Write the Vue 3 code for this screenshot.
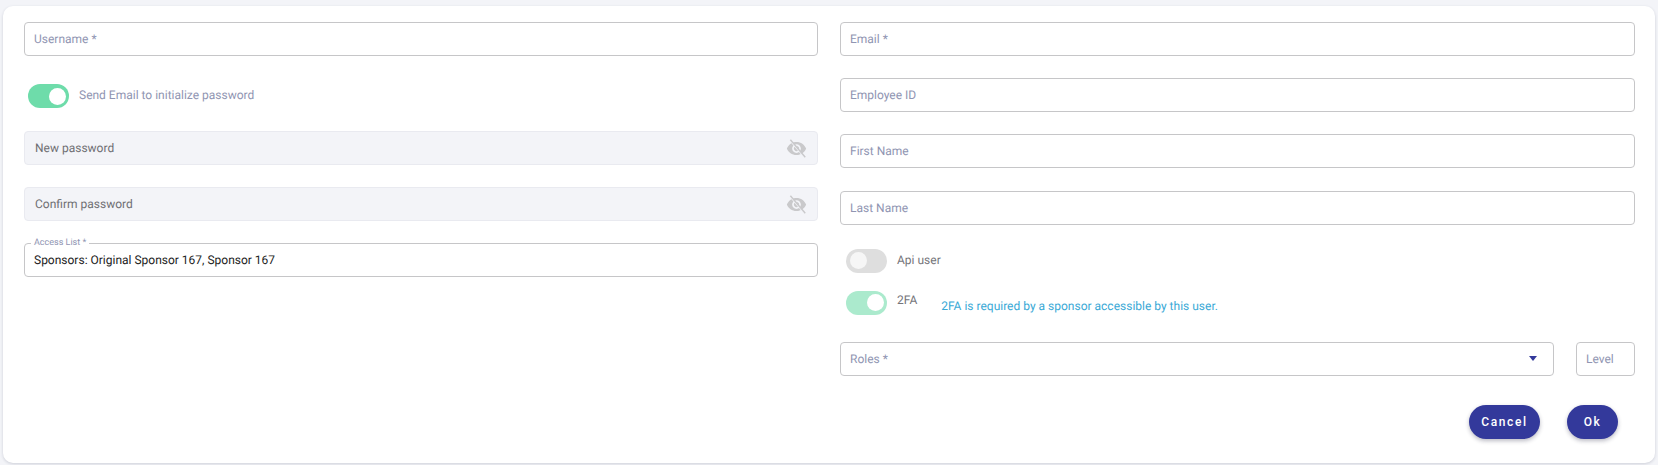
<script setup>
const eyeBody = 'M12 4.5C7 4.5 2.73 7.61 1 12c1.73 4.39 6 7.5 11 7.5s9.27-3.11 11-7.5c-1.73-4.39-6-7.5-11-7.5zM12 17c-2.76 0-5-2.24-5-5s2.24-5 5-5 5 2.24 5 5-2.24 5-5 5zm0-8c-1.66 0-3 1.34-3 3s1.34 3 3 3 3-1.34 3-3-1.34-3-3-3z'
</script>

<template>
  <div class="page">
    <form class="card" @submit.prevent>
      <div class="columns">
        <div class="col">
          <div class="field"><span class="ph">Username *</span></div>
          <div class="toggle-row send">
            <span class="switch on"><span class="knob"></span></span>
            <span class="toggle-label muted">Send Email to initialize password</span>
          </div>
          <div class="field filled">
            <span class="ph dark">New password</span>
            <svg class="eye" viewBox="0 0 24 24">
              <path :d="eyeBody" />
              <line class="slash-bg" x1="4" y1="2" x2="21" y2="22" />
              <line class="slash" x1="5" y1="2" x2="22" y2="22" />
            </svg>
          </div>
          <div class="field filled">
            <span class="ph dark">Confirm password</span>
            <svg class="eye" viewBox="0 0 24 24">
              <path :d="eyeBody" />
              <line class="slash-bg" x1="4" y1="2" x2="21" y2="22" />
              <line class="slash" x1="5" y1="2" x2="22" y2="22" />
            </svg>
          </div>
          <div class="field">
            <span class="float">Access List *</span>
            <span class="value">Sponsors: Original Sponsor 167, Sponsor 167</span>
          </div>
        </div>

        <div class="col">
          <div class="field"><span class="ph">Email *</span></div>
          <div class="field"><span class="ph">Employee ID</span></div>
          <div class="field"><span class="ph">First Name</span></div>
          <div class="field"><span class="ph">Last Name</span></div>
          <div class="toggle-row api">
            <span class="switch off"><span class="knob"></span></span>
            <span class="toggle-label">Api user</span>
          </div>
          <div class="toggle-row tfa">
            <span class="switch on faded"><span class="knob"></span></span>
            <span class="toggle-label">2FA</span>
            <span class="hint">2FA is required by a sponsor accessible by this user.</span>
          </div>
          <div class="roles-row">
            <div class="field grow">
              <span class="ph">Roles *</span>
              <span class="caret"></span>
            </div>
            <div class="field level"><span class="ph">Level</span></div>
          </div>
          <div class="actions">
            <button type="button" class="btn cancel">Cancel</button>
            <button type="button" class="btn ok">Ok</button>
          </div>
        </div>
      </div>
    </form>
  </div>
</template>

<style>
html, body { margin: 0; background: #f3f4f8; }
</style>

<style scoped>
.page {
  width: 1658px;
  height: 465px;
  box-sizing: border-box;
  padding: 6px 3px 2px;
  background: #f3f4f8;
  font-family: Roboto, "Liberation Sans", sans-serif;
  font-size: 12px;
  text-rendering: geometricPrecision;
  overflow: hidden;
}
.card {
  height: 457px;
  box-sizing: border-box;
  padding: 16px 20px 0 21px;
  background: #fff;
  border-radius: 10px;
  box-shadow: 0 1px 3px rgba(40, 45, 80, 0.18);
}
.columns {
  display: grid;
  grid-template-columns: 794px 795px;
  column-gap: 22px;
}
.col {
  display: flex;
  flex-direction: column;
  gap: 22.2px;
}
.field {
  position: relative;
  display: flex;
  align-items: center;
  height: 34px;
  box-sizing: border-box;
  padding: 0 9px;
  border: 1px solid #c6c6c8;
  border-radius: 4px;
  background: #fff;
}
.ph { color: #9095b2; }
.ph.dark { color: #6f6f73; }
.filled {
  background: #f3f4f8;
  border-color: #e9eaf0;
  padding-left: 10px;
}
.eye {
  position: absolute;
  right: 10px;
  top: 6px;
  width: 21px;
  height: 21px;
  fill: #c9c9cb;
}
.slash-bg { stroke: #f3f4f8; stroke-width: 1.6; }
.slash { stroke: #c9c9cb; stroke-width: 1.6; }
.value { color: #222; }
.float {
  position: absolute;
  left: 6px;
  top: -6px;
  padding: 0 3px;
  background: #fff;
  color: #9095b2;
  font-size: 9px;
  line-height: 11px;
}
.toggle-row {
  display: flex;
  align-items: center;
  height: 24px;
}
.send { padding-left: 4px; margin: 6px 0 0.6px; }
.api { padding-left: 6px; margin: 2px 0 -4px; }
.tfa { padding-left: 6px; margin-bottom: 5px; }
.switch {
  position: relative;
  display: block;
  flex: none;
  width: 41px;
  height: 24px;
  border-radius: 12px;
}
.switch.on { background: #6edcaa; }
.switch.faded { background: #abeacd; }
.switch.off { background: #dedede; }
.knob {
  position: absolute;
  top: 3.5px;
  width: 17px;
  height: 17px;
  border-radius: 50%;
  background: #fff;
}
.on .knob { right: 3px; }
.off .knob { left: 4px; background: #f6f6f6; }
.toggle-label {
  position: relative;
  top: -1px;
  margin-left: 10px;
  color: #75757a;
}
.toggle-label.muted { color: #9095b2; }
.tfa .toggle-label { top: -3px; }
.hint {
  margin-left: 24px;
  color: #3aa9d6;
  font-size: 12px;
  position: relative;
  top: 3px;
}
.roles-row {
  display: flex;
  gap: 22px;
}
.grow { flex: 1; }
.level { width: 59px; flex: none; }
.caret {
  position: absolute;
  right: 16px;
  top: 13px;
  border-left: 4px solid transparent;
  border-right: 4px solid transparent;
  border-top: 5px solid #33399b;
}
.actions {
  display: flex;
  justify-content: flex-end;
  gap: 27px;
  padding-right: 17px;
  margin-top: 6.6px;
}
.btn {
  height: 34px;
  border: 0;
  border-radius: 17px;
  background: #33399b;
  color: #fff;
  font: 500 12px Roboto, sans-serif;
  letter-spacing: 1.6px;
  box-shadow: 0 2px 4px rgba(30, 30, 60, 0.3);
  padding: 0;
}
.cancel { width: 71px; }
.ok { width: 51px; }
</style>
